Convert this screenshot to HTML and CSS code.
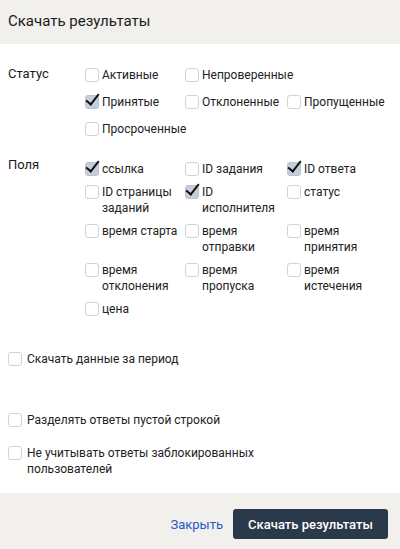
FILE: index.html
```html
<!DOCTYPE html>
<html lang="ru">
<head>
<meta charset="utf-8">
<link rel="stylesheet" href="styles.css">
</head>
<body>
<div class="dialog">
  <div class="header">Скачать результаты</div>
  <div class="content">
    <div class="group">
      <div class="label">Статус</div>
      <div class="grid">
        <label class="cb"><span class="box"></span><span class="t">Активные</span></label>
        <label class="cb"><span class="box"></span><span class="t">Непроверенные</span></label>
        <span></span>
        <label class="cb"><span class="box on"></span><span class="t">Принятые</span></label>
        <label class="cb"><span class="box"></span><span class="t">Отклоненные</span></label>
        <label class="cb"><span class="box"></span><span class="t">Пропущенные</span></label>
        <label class="cb"><span class="box"></span><span class="t">Просроченные</span></label>
      </div>
    </div>
    <div class="group fields">
      <div class="label">Поля</div>
      <div class="grid">
        <label class="cb"><span class="box on"></span><span class="t">ссылка</span></label>
        <label class="cb"><span class="box"></span><span class="t">ID задания</span></label>
        <label class="cb"><span class="box on"></span><span class="t">ID ответа</span></label>
        <label class="cb"><span class="box"></span><span class="t">ID страницы заданий</span></label>
        <label class="cb"><span class="box on"></span><span class="t">ID исполнителя</span></label>
        <label class="cb"><span class="box"></span><span class="t">статус</span></label>
        <label class="cb"><span class="box"></span><span class="t">время старта</span></label>
        <label class="cb"><span class="box"></span><span class="t">время отправки</span></label>
        <label class="cb"><span class="box"></span><span class="t">время принятия</span></label>
        <label class="cb"><span class="box"></span><span class="t">время отклонения</span></label>
        <label class="cb"><span class="box"></span><span class="t">время пропуска</span></label>
        <label class="cb"><span class="box"></span><span class="t">время истечения</span></label>
        <label class="cb"><span class="box"></span><span class="t">цена</span></label>
      </div>
    </div>
    <label class="cb single period"><span class="box"></span><span class="t">Скачать данные за период</span></label>
    <label class="cb single split"><span class="box"></span><span class="t">Разделять ответы пустой строкой</span></label>
    <label class="cb single blocked"><span class="box"></span><span class="t">Не учитывать ответы заблокированных пользователей</span></label>
  </div>
  <div class="footer">
    <a class="close">Закрыть</a>
    <button class="primary">Скачать результаты</button>
  </div>
</div>
</body>
</html>
```
FILE: styles.css
```css
* { box-sizing: border-box; }
html, body { margin: 0; padding: 0; background: #fff; }
body {
  font-family: Roboto, "Noto Sans", sans-serif;
  font-size: 12px;
  color: #222;
}
.dialog { width: 400px; height: 549px; display: flex; flex-direction: column; }
.header {
  background: #f2f0ed;
  height: 44px;
  padding: 12px 8px 0;
  font-size: 15px;
  color: #1a1a1a;
}
.content { flex: 1; padding: 21px 8px 0; display: flex; flex-direction: column; }
.group { display: flex; }
.label { width: 77px; font-size: 13px; line-height: 17px; color: #1a1a1a; }
.grid {
  display: grid;
  grid-template-columns: 100px 102px 100px;
  row-gap: 11px;
  padding-top: 2px;
}
.fields { margin-top: 19px; }
.fields .grid { row-gap: 7px; padding-top: 5px; }
.cb { display: flex; align-items: flex-start; line-height: 16px; }
.box {
  position: relative;
  flex: none;
  width: 14px; height: 14px;
  border: 1px solid #d3d3d3;
  border-radius: 3px;
  margin: 1px 3px 0 0;
  background: #fff;
}
.box.on { background: #c5cfdc; border-color: #b8c2cf; }
.box.on::after {
  content: "";
  position: absolute;
  left: 3px; top: -5px;
  width: 5px; height: 12px;
  border: solid #111;
  border-width: 0 2.5px 2.5px 0;
  transform: rotate(38deg);
  transform-origin: center;
}
.t { color: #222; }
.single .box { margin-right: 5px; }
.period { margin-top: 34px; }
.split { margin-top: 45px; }
.blocked { margin-top: 17px; }
.blocked .t { width: 240px; }
.footer {
  background: #f2f0ed;
  height: 56px;
  display: flex;
  align-items: center;
  justify-content: flex-end;
  padding: 0 12px 0 0;
  gap: 10px;
}
.close { color: #2457c5; font-size: 13px; margin-top: 6px; }
.primary {
  background: #2b3a4b;
  color: #fff;
  border: none;
  border-radius: 3px;
  height: 30px;
  width: 155px;
  font-family: inherit;
  font-size: 13px;
  font-weight: 500;
  margin-top: 6px;
}
```
